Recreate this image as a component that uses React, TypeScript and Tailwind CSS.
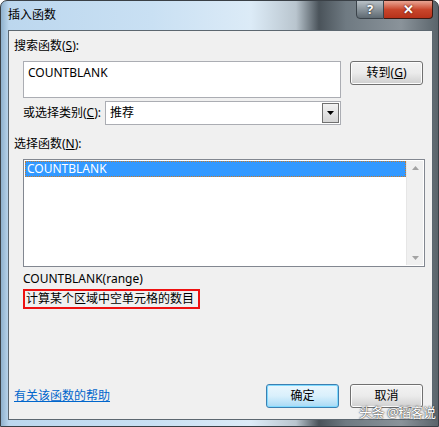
import React from "react"

const font = { fontFamily: '"Noto Sans", "Noto Sans CJK SC", sans-serif' }

function Btn({ label, def }: { label: React.ReactNode; def?: boolean }) {
  return (
    <div
      className={
        "w-[73px] h-[24px] rounded-[3px] border flex items-center justify-center text-[12px] text-black " +
        (def
          ? "border-[#3c7fb1] bg-gradient-to-b from-[#eaf6fd] via-[#d9f0fc] to-[#a7d9f5] shadow-[inset_0_0_0_1px_#7fdaff]"
          : "border-[#707070] bg-gradient-to-b from-[#f2f2f2] via-[#ebebeb] to-[#cfcfcf] shadow-[inset_0_0_0_1px_#fcfcfc]")
      }
    >
      {label}
    </div>
  )
}

export default function App() {
  return (
    <div className="w-[439px] h-[427px] overflow-hidden bg-white" style={font}>
      <div className="relative w-[439px] h-[427px] rounded-t-[7px] border border-[#3a4046] bg-[linear-gradient(90deg,#8fb1cd_0px,#bcd7ee_8px,#c9e0f3_150px,#dcebf7_250px,#b9c5ce_295px,#4a535a_318px,#6f7a82_345px,#8a939a_400px,#5a646b_100%)] flex flex-col">
        {/* TITLE BAR */}
        <div className="h-[29px] flex items-start shrink-0">
          <div className="pl-[7px] pt-[6px] text-[12px] leading-[16px] text-black">插入函数</div>
          <div className="ml-auto mr-[5px] flex">
            <div className="w-[28px] h-[19px] -mt-px rounded-bl-[4px] border border-[#3b434a] bg-gradient-to-b from-[#b9c1c7] via-[#8b959c] to-[#5f6a72] flex items-center justify-center text-white text-[13px] font-bold leading-none [text-shadow:0_0_2px_#000]">
              ?
            </div>
            <div className="w-[49px] h-[19px] -mt-px rounded-br-[4px] border border-l-0 border-[#3b1a14] bg-gradient-to-b from-[#e8a493] via-[#c9462c] to-[#b7321a] flex items-center justify-center text-white text-[13px] font-bold leading-none [text-shadow:0_0_2px_#3b0a00]">
              ✕
            </div>
          </div>
        </div>

        {/* CLIENT AREA */}
        <div className="ml-[7px] w-[425px] h-[390px] border border-[#5c6770] bg-[#f0f0f0] flex flex-col text-[12px] leading-[16px] text-black">
          <div className="mt-[7px] pl-[5px] h-[16px]">
            搜索函数(<span className="underline">S</span>):
          </div>

          <div className="mt-[7px] flex items-start">
            <div className="ml-[14px] w-[318px] h-[37px] bg-white border border-[#abadb3] px-[4px] pt-[3px]">COUNTBLANK</div>
            <div className="ml-[9px]">
              <Btn label={<>转到(<span className="underline">G</span>)</>} />
            </div>
          </div>

          <div className="mt-[3px] flex items-center">
            <div className="ml-[14px] w-[82px]">
              或选择类别(<span className="underline">C</span>):
            </div>
            <div className="w-[236px] h-[24px] bg-white border border-[#abadb3] flex items-center">
              <span className="pl-[4px]">推荐</span>
              <div className="ml-auto mr-px w-[17px] h-[20px] border border-[#707070] bg-gradient-to-b from-[#f2f2f2] to-[#d5d5d5] flex items-center justify-center">
                <svg width="7" height="4" viewBox="0 0 7 4"><path d="M0 0h7L3.5 4z" fill="#000" /></svg>
              </div>
            </div>
          </div>

          <div className="mt-[11px] pl-[5px] h-[16px]">
            选择函数(<span className="underline">N</span>):
          </div>

          <div className="mt-[7px] ml-[14px] w-[402px] h-[108px] bg-white border border-[#828790] flex p-px">
            <div className="flex-1">
              <div className="h-[16px] bg-[#3399ff] text-white border border-dotted border-[#c87a2a] pl-[1px] leading-[14px]">COUNTBLANK</div>
            </div>
            <div className="w-[17px] bg-[#f0f0f0] border-l border-[#e6e6e6] flex flex-col items-center justify-between py-[5px]">
              <svg width="7" height="4" viewBox="0 0 7 4"><path d="M3.5 0L7 4H0z" fill="#a3a3a3" /></svg>
              <svg width="7" height="4" viewBox="0 0 7 4"><path d="M0 0h7L3.5 4z" fill="#a3a3a3" /></svg>
            </div>
          </div>

          <div className="mt-[4px] ml-[14px] h-[16px]">COUNTBLANK(range)</div>
          <div className="mt-[2px] ml-[14px] w-[177px] h-[20px] border-2 border-[#ee1111] pl-[1px] leading-[16px]">
            计算某个区域中空单元格的数目
          </div>

          <div className="mt-auto mb-[11px] flex items-center">
            <span className="pl-[5px] text-[#0066cc] underline">有关该函数的帮助</span>
            <div className="ml-auto flex gap-[11px] mr-[9px]">
              <Btn label="确定" def />
              <Btn label="取消" />
            </div>
          </div>
        </div>

        {/* WATERMARK */}
        <div className="absolute left-[358px] top-[403px] text-[13px] leading-[16px] text-white tracking-[-0.5px] [text-shadow:0_0_2px_#333,0_0_1px_#333]">
          头条 @稻客说
        </div>
      </div>
    </div>
  )
}
